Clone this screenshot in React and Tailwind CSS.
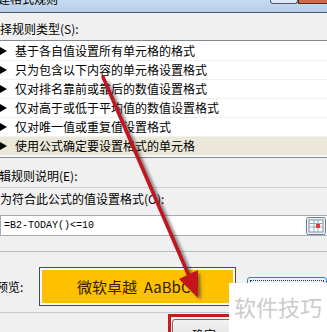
import React from 'react';

const rules = [
    '基于各自值设置所有单元格的格式',
    '只为包含以下内容的单元格设置格式',
    '仅对排名靠前或靠后的数值设置格式',
    '仅对高于或低于平均值的数值设置格式',
    '仅对唯一值或重复值设置格式',
    '使用公式确定要设置格式的单元格',
];

const RuleRow = ({ text, selected }) => (
    <div className={`h-[19px] flex items-center border-b border-[#f1f1f1] ${selected ? 'bg-[#ebe8da]' : ''}`}>
        <span className="w-0 h-0 border-l-[7px] border-l-black border-y-[4px] border-y-transparent" />
        <span className="ml-[8px] text-[12px] leading-[18px] text-black whitespace-nowrap">{text}</span>
    </div>
);

const RangeIcon = () => (
    <svg width="20" height="18" viewBox="0 0 20 18">
        <rect x="0.5" y="0.5" width="19" height="17" rx="2" fill="#e8eef4" stroke="#6a7d90" />
        <rect x="3" y="3" width="14" height="12" fill="#fff" stroke="#7d8fa3" />
        <path d="M3 6.5h14M3 10h14M8 3v12M12 3v12" stroke="#8fa7c0" strokeWidth="1" />
        <rect x="10" y="7" width="4" height="4" fill="#e23a3a" />
    </svg>
);

const Arrow = () => (
    <svg className="absolute inset-0 pointer-events-none" width="327" height="332" viewBox="0 0 327 332">
        <defs>
            <filter id="sh" x="-20%" y="-20%" width="140%" height="140%">
                <feGaussianBlur stdDeviation="1.5" />
            </filter>
        </defs>
        <g opacity="0.55" transform="translate(3 2)" filter="url(#sh)">
            <line x1="104" y1="80" x2="189" y2="276" stroke="#222" strokeWidth="4" />
            <polygon points="198,298 180,279 197,271" fill="#222" />
        </g>
        <line x1="103" y1="77" x2="189" y2="276" stroke="#c2151d" strokeWidth="3.5" strokeLinecap="round" />
        <polygon points="198,298 179,279 198,270" fill="#c2151d" />
    </svg>
);

export default function App() {
    return (
        <div className="relative w-[327px] h-[332px] overflow-hidden bg-[#f0f0f0] text-black" style={{ fontFamily: '"Noto Sans CJK SC", "Liberation Sans", sans-serif' }}>
            {/* title bar */}
            <div className="h-[13px] flex justify-between items-start bg-gradient-to-b from-[#c7dbf0] to-[#b6cfe9] border-b border-[#4d5b68] overflow-hidden">
                <span className="-ml-[14px] -mt-[10px] text-[12px] leading-[18px] whitespace-nowrap text-black">新建格式规则</span>
                <div className="flex">
                    <div className="w-[28px] h-[4px] bg-[#dfe9f5] border-x border-b border-[#4a5a6b] rounded-b-[3px]" />
                    <div className="w-[29px] h-[4px] bg-[#d3684d] border-l border-b border-[#5a2a20]" />
                </div>
            </div>

            <div className="h-[27px] pt-[7px] -ml-[12px] text-[12px] leading-[18px] whitespace-nowrap">选择规则类型(S):</div>

            {/* rule list */}
            <div className="bg-white border-y border-[#828790] pt-[1px] pb-[1px]">
                {rules.map((r, i) => (
                    <RuleRow key={r} text={r} selected={i === rules.length - 1} />
                ))}
            </div>

            <div className="mt-[9px] -ml-[13px] text-[12px] leading-[18px] whitespace-nowrap">编辑规则说明(E):</div>
            <div className="mt-[2px] border-t border-[#c9cdd2]" />

            <div className="mt-[2px] text-[12px] leading-[18px] whitespace-nowrap">为符合此公式的值设置格式(O):</div>

            {/* formula input */}
            <div className="mt-[7px] h-[21px] flex items-center justify-between bg-white border border-[#a6acb3] border-r-0">
                <span className="pl-[3px] text-[10px] leading-[18px]" style={{ fontFamily: '"Liberation Mono", monospace' }}>=B2-TODAY()&lt;=10</span>
                <span className="mr-[1px] flex"><RangeIcon /></span>
            </div>

            <div className="mt-[15px] border-t border-[#b9bec4]" />

            {/* preview */}
            <div className="mt-[15px] flex items-start">
                <span className="-ml-[4px] w-[43px] mt-[11px] text-[12px] leading-[18px] whitespace-nowrap">预览:</span>
                <div className="w-[199px] h-[39px] border border-[#4a4a4a] p-[2px] bg-[#f7f7f7]">
                    <div className="h-full bg-[#ffc000] flex items-center justify-center text-[15px] text-[#2e2200] leading-none whitespace-nowrap">
                        微软卓越&nbsp;&nbsp;AaBbCc
                    </div>
                </div>
                <div className="ml-[11px] mt-[10px] w-[80px] h-[24px] rounded-[3px] border border-[#3c7fb1] bg-[#e5f1fb] p-[2px]">
                    <div className="h-full border border-dotted border-[#333]" />
                </div>
            </div>

            <div className="mt-[6px] border-t border-[#c6cacf]" />

            {/* OK button */}
            <div className="ml-[168px] mt-[1px] w-[82px] h-[30px] border-[3px] border-[#c91a1a] pt-[2px] pl-[1px]">
                <div className="w-[76px] h-[30px] rounded-[3px] border border-[#707070] bg-gradient-to-b from-[#f2f2f2] to-[#dcdcdc] flex justify-start pl-[19px]">
                    <span className="mt-[6px] text-[12px] leading-[18px]">确定</span>
                </div>
            </div>

            {/* watermark */}
            <div className="absolute left-[229px] top-[283px] w-[98px] h-[49px] bg-white flex items-start justify-center">
                <span className="mt-[9px] text-[22px] leading-[28px] text-[#cbcbcb] whitespace-nowrap">软件技巧</span>
            </div>

            <Arrow />
        </div>
    );
}
